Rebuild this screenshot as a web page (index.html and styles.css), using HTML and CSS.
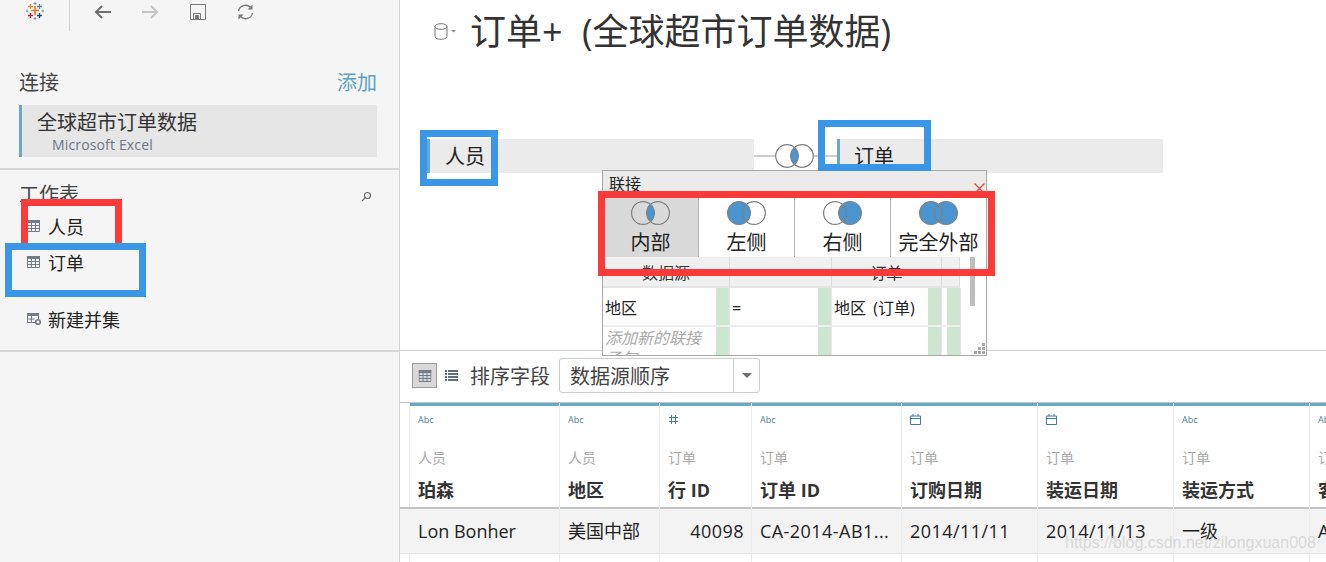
FILE: index.html
```html
<!DOCTYPE html>
<html lang="en">
<head>
    <meta charset="UTF-8">
    <title>订单+ (全球超市订单数据)</title>
    <link rel="stylesheet" href="styles.css">
</head>
<body>
    <div class="page">
        <aside class="sidebar">
            <div class="toolbar">
                <div class="logo-cell">
                    <svg width="18" height="18" viewBox="0 0 18 18" fill="none" stroke-width="1.3">
                        <path d="M9 4v9M5 8.500h8" stroke="#e8762c" stroke-width="1.6"/>
                        <path d="M4.500 2v5M2 4.500h5" stroke="#eb912c"/>
                        <path d="M13.500 2v5M11 4.500h5" stroke="#5b879b"/>
                        <path d="M4.500 11v5M2 13.500h5" stroke="#c72035"/>
                        <path d="M13.500 11v5M11 13.500h5" stroke="#1f447e"/>
                        <path d="M9 0v3M7.500 1.500h3M9 15v3M7.500 16.500h3M1 7.500v3M0 9h2.500M17 7.500v3M15.500 9H18" stroke="#7f96a8" stroke-width="1"/>
                    </svg>
                </div>
                <div class="tools">
                    <svg width="17" height="14" viewBox="0 0 17 14" fill="none" stroke="#6e6e6e" stroke-width="2"><path d="M17 7H2M8 1L2 7l6 6"/></svg>
                    <svg width="17" height="14" viewBox="0 0 17 14" fill="none" stroke="#c4c4c4" stroke-width="2"><path d="M0 7h15M9 1l6 6-6 6"/></svg>
                    <svg width="16" height="16" viewBox="0 0 16 16" fill="none" stroke="#777"><path d="M.5.500h15v15H.5zM3.500 15.500v-6h7v6"/><path d="M5.500 11.500h3v4h-3z" fill="#777"/></svg>
                    <svg width="17" height="16" viewBox="0 0 17 16" fill="none" stroke="#777" stroke-width="1.300"><path d="M1.500 7a7 7 0 0 1 12-3.500M15.500 9a7 7 0 0 1-12 3.500"/><path d="M15.500 .5v5h-5z M1.500 15.500v-5h5z" fill="#777" stroke="none"/></svg>
                </div>
            </div>
            <section class="connections">
                <div class="section-head">
                    <span class="section-title">连接</span>
                    <span class="add-link">添加</span>
                </div>
                <div class="conn-box">
                    <div class="conn-name">全球超市订单数据</div>
                    <div class="conn-type">Microsoft Excel</div>
                </div>
            </section>
            <section class="sheets">
                <div class="section-head sheets-head">
                    <span class="section-title">工作表</span>
                    <svg class="search-icon" width="11" height="11" viewBox="0 0 11 11" fill="none" stroke="#666" stroke-width="1.100"><circle cx="6.500" cy="4.500" r="3"/><path d="M4.300 6.700L1 10"/></svg>
                </div>
                <div class="sheet-item sheet-first">
                    <svg class="sheet-icon" width="13" height="12" viewBox="0 0 13 12"><use href="#table-glyph"/></svg>
                    <span>人员</span>
                </div>
                <div class="sheet-item sheet-second">
                    <svg class="sheet-icon" width="13" height="12" viewBox="0 0 13 12"><use href="#table-glyph"/></svg>
                    <span>订单</span>
                </div>
                <div class="sheet-item sheet-union">
                    <svg class="sheet-icon" width="15" height="14" viewBox="0 0 15 14">
                        <path d="M0 1h12v3H0z" fill="#737b8a"/>
                        <path d="M.5 1.500h11v9H.5zM4.500 4v6.500M.5 7h7" fill="none" stroke="#737b8a"/>
                        <circle cx="11" cy="10" r="2.300" fill="#f5f5f5" stroke="#737b8a" stroke-width="1.600"/>
                    </svg>
                    <span>新建并集</span>
                </div>
            </section>
        </aside>

        <main class="main">
            <div class="canvas">
                <div class="title-row">
                    <svg width="24" height="18" viewBox="0 0 24 18" fill="none" stroke="#777">
                        <ellipse cx="7" cy="3.500" rx="6" ry="2.800"/>
                        <path d="M1 3.500v10c0 1.600 2.700 2.800 6 2.800s6-1.200 6-2.800v-10"/>
                        <path d="M17 7h5l-2.500 2.500z" fill="#888" stroke="none"/>
                    </svg>
                    <h1>订单+ (全球超市订单数据)</h1>
                </div>
                <div class="join-row">
                    <div class="table-pill table-left">人员</div>
                    <div class="join-link">
                        <svg width="83" height="24" viewBox="0 0 83 24" fill="none">
                            <path d="M0 12h22M60 12h23" stroke="#bdbdbd" stroke-width="1.500"/>
                            <path d="M40.500 3.600a11.300 11.300 0 0 1 0 16.800a11.300 11.300 0 0 1 0-16.800z" fill="#4a95d0"/>
                            <circle cx="33" cy="12" r="11.300" stroke="#808080" stroke-width="1.200"/>
                            <circle cx="48" cy="12" r="11.300" stroke="#808080" stroke-width="1.200"/>
                        </svg>
                    </div>
                    <div class="table-pill table-right">订单</div>
                </div>

                <div class="join-popup">
                    <div class="popup-title">
                        <span>联接</span>
                        <svg width="11" height="11" viewBox="0 0 11 11" stroke="#c8553f" stroke-width="1.400"><path d="M.5.500l10 10M10.500.500l-10 10"/></svg>
                    </div>
                    <div class="join-types">
                        <div class="join-type is-active">
                            <svg width="39" height="24" viewBox="0 0 39 24" fill="none"><path d="M19.500 3.600a11.500 11.500 0 0 1 0 16.800a11.500 11.500 0 0 1 0-16.800z" fill="#4a95d0"/><circle cx="12" cy="12" r="11.400" stroke="#808080" stroke-width="1.200"/><circle cx="27" cy="12" r="11.400" stroke="#808080" stroke-width="1.200"/></svg>
                            <span>内部</span>
                        </div>
                        <div class="join-type">
                            <svg width="39" height="24" viewBox="0 0 39 24" fill="none"><circle cx="12" cy="12" r="11.400" fill="#4a95d0"/><circle cx="12" cy="12" r="11.400" stroke="#808080" stroke-width="1.200"/><circle cx="27" cy="12" r="11.400" stroke="#808080" stroke-width="1.200"/></svg>
                            <span>左侧</span>
                        </div>
                        <div class="join-type">
                            <svg width="39" height="24" viewBox="0 0 39 24" fill="none"><circle cx="27" cy="12" r="11.400" fill="#4a95d0"/><circle cx="12" cy="12" r="11.400" stroke="#808080" stroke-width="1.200"/><circle cx="27" cy="12" r="11.400" stroke="#808080" stroke-width="1.200"/></svg>
                            <span>右侧</span>
                        </div>
                        <div class="join-type">
                            <svg width="39" height="24" viewBox="0 0 39 24" fill="none"><circle cx="12" cy="12" r="11.400" fill="#4a95d0"/><circle cx="27" cy="12" r="11.400" fill="#4a95d0"/><circle cx="12" cy="12" r="11.400" stroke="#808080" stroke-width="1.200"/><circle cx="27" cy="12" r="11.400" stroke="#808080" stroke-width="1.200"/></svg>
                            <span>完全外部</span>
                        </div>
                    </div>
                    <div class="clause-grid">
                        <div class="clause-head">数据源</div>
                        <div class="clause-head"></div>
                        <div class="clause-head">订单</div>
                        <div class="clause-head"></div>

                        <div class="clause-cell has-grip">地区</div>
                        <div class="clause-cell has-grip">=</div>
                        <div class="clause-cell has-grip">地区 (订单)</div>
                        <div class="clause-cell has-grip"></div>

                        <div class="clause-cell has-grip clause-add">添加新的联接子句</div>
                        <div class="clause-cell has-grip"></div>
                        <div class="clause-cell has-grip"></div>
                        <div class="clause-cell has-grip"></div>
                    </div>
                    <div class="popup-scroll"></div>
                    <svg class="popup-grip" width="11" height="11" viewBox="0 0 11 11" fill="#a8a8a8"><path d="M8 0h3v3H8zM4 4h3v3H4zM8 4h3v3H8zM0 8h3v3H0zM4 8h3v3H4zM8 8h3v3H8z"/></svg>
                </div>
            </div>

            <div class="sort-bar">
                <div class="view-btn">
                    <svg width="14" height="12" viewBox="0 0 13 12"><use href="#table-glyph"/></svg>
                </div>
                <svg class="list-btn" width="13" height="11" viewBox="0 0 13 11" fill="#646c7c"><path d="M0 0h2v2H0zM3 0h10v2H3zM0 3h2v2H0zM3 3h10v2H3zM0 6h2v2H0zM3 6h10v2H3zM0 9h2v2H0zM3 9h10v2H3z"/></svg>
                <span class="sort-label">排序字段</span>
                <div class="sort-select">
                    <span class="sort-value">数据源顺序</span>
                    <span class="sort-caret"></span>
                </div>
            </div>

            <div class="data-grid">
                <div class="grid-col col-gutter"><div class="col-head"></div><div class="col-cell"></div></div>

                <div class="grid-col col-a">
                    <div class="col-head">
                        <div class="type-icon">Abc</div>
                        <div class="source">人员</div>
                        <div class="field">珀森</div>
                    </div>
                    <div class="col-cell">Lon Bonher</div>
                </div>
                <div class="grid-col col-b">
                    <div class="col-head">
                        <div class="type-icon">Abc</div>
                        <div class="source">人员</div>
                        <div class="field">地区</div>
                    </div>
                    <div class="col-cell">美国中部</div>
                </div>
                <div class="grid-col col-c">
                    <div class="col-head">
                        <div class="type-icon"><svg width="11" height="11" viewBox="0 0 11 11" fill="none" stroke="#3f7f9c"><path d="M3.500 1v9M7.500 1v9M1 3.500h9M1 7.500h9"/></svg></div>
                        <div class="source">订单</div>
                        <div class="field">行 ID</div>
                    </div>
                    <div class="col-cell num wide">40098</div>
                </div>
                <div class="grid-col col-a">
                    <div class="col-head">
                        <div class="type-icon">Abc</div>
                        <div class="source">订单</div>
                        <div class="field">订单 ID</div>
                    </div>
                    <div class="col-cell wide">CA-2014-AB1...</div>
                </div>
                <div class="grid-col col-d">
                    <div class="col-head">
                        <div class="type-icon"><svg width="11" height="11" viewBox="0 0 11 11"><use href="#date-glyph"/></svg></div>
                        <div class="source">订单</div>
                        <div class="field">订购日期</div>
                    </div>
                    <div class="col-cell wide">2014/11/11</div>
                </div>
                <div class="grid-col col-d">
                    <div class="col-head">
                        <div class="type-icon"><svg width="11" height="11" viewBox="0 0 11 11"><use href="#date-glyph"/></svg></div>
                        <div class="source">订单</div>
                        <div class="field">装运日期</div>
                    </div>
                    <div class="col-cell wide">2014/11/13</div>
                </div>
                <div class="grid-col col-d">
                    <div class="col-head">
                        <div class="type-icon">Abc</div>
                        <div class="source">订单</div>
                        <div class="field">装运方式</div>
                    </div>
                    <div class="col-cell">一级</div>
                </div>
                <div class="grid-col col-d">
                    <div class="col-head">
                        <div class="type-icon">Abc</div>
                        <div class="source">订单</div>
                        <div class="field">客户 ID</div>
                    </div>
                    <div class="col-cell">AB-10015</div>
                </div>
            </div>
        </main>

        <!-- annotation boxes drawn over the screenshot -->
        <div class="mark mark-red mark-popup"></div>
        <div class="mark mark-red mark-sheet1"></div>
        <div class="mark mark-blue mark-sheet2"></div>
        <div class="mark mark-blue mark-table1"></div>
        <div class="mark mark-blue mark-table2"></div>
        <div class="watermark">https://blog.csdn.net/zilongxuan008</div>
    </div>

    <svg class="glyphs" width="0" height="0">
        <symbol id="table-glyph" viewBox="0 0 13 12">
            <path d="M0 0h13v3H0z" fill="#737b8a"/>
            <path d="M.5.500h12v11H.5zM.5 5.500h12M.5 8.500h12M4.500 3v8.500M8.500 3v8.500" fill="none" stroke="#737b8a"/>
        </symbol>
        <symbol id="date-glyph" viewBox="0 0 11 11">
            <path d="M.5 2h10v8.500H.5zM.5 4.500h10M3 0v2.500M8 0v2.500" fill="none" stroke="#3f7f9c"/>
        </symbol>
    </svg>
</body>
</html>
```

FILE: styles.css
```css
* {
    box-sizing: border-box;
}
html, body {
    margin: 0;
    height: 100%;
    overflow: hidden;
    background-color: #fff;
}
body {
    font-family: "Open Sans", "Noto Sans CJK SC", sans-serif;
    color: #222;
}
.glyphs {
    position: absolute;
}
.page {
    position: relative;
    display: flex;
    width: 1326px;
    height: 562px;
    overflow: hidden;
}

/* left column */
.sidebar {
    flex: 0 0 400px;
    background-color: #f5f5f5;
    border-right: 1px solid #d4d4d4;
}
.toolbar {
    display: flex;
    height: 31px;
}
.logo-cell {
    width: 70px;
    padding: 2px 0 0 26px;
    border-right: 1px solid #d0d0d0;
}
.tools {
    display: flex;
    align-items: flex-start;
    gap: 31px;
    padding: 4px 0 0 24px;
}
.tools svg:nth-child(-n+2) {
    margin-top: 1px;
}
.connections {
    height: 139px;
    padding: 37px 22px 0 19px;
    border-bottom: 2px solid #d6d6d6;
}
.section-head {
    display: flex;
    justify-content: space-between;
    align-items: center;
    height: 30px;
    font-size: 20px;
    line-height: 30px;
}
.section-title {
    color: #444;
}
.add-link {
    color: #5ba3c4;
}
.conn-box {
    height: 52px;
    margin-top: 7px;
    padding: 4px 0 0 15px;
    background-color: #e6e6e6;
    border-left: 3px solid #6aa8c9;
}
.conn-name {
    font-size: 20px;
    line-height: 27px;
    color: #333;
}
.conn-type {
    padding-left: 15px;
    font-size: 14px;
    line-height: 18px;
    letter-spacing: .15px;
    color: #6c7686;
}
.sheets {
    height: 182px;
    padding: 10px 0 0 19px;
    border-bottom: 2px solid #d6d6d6;
}
.sheets-head {
    padding-right: 27px;
}
.search-icon {
    margin-top: 2px;
}
.sheet-item {
    display: flex;
    align-items: center;
    gap: 8px;
    height: 26px;
    padding-left: 8px;
    font-size: 18px;
    color: #222;
}
.sheet-first {
    margin-top: 3px;
}
.sheet-second {
    margin-top: 10px;
}
.sheet-union {
    margin-top: 31px;
    gap: 6px;
}

/* right column */
.main {
    flex: 1;
    min-width: 0;
}
.canvas {
    position: relative;
    height: 351px;
    border-bottom: 1px solid #d4d4d4;
    padding: 14px 0 0 34px;
}
.title-row {
    display: flex;
    align-items: center;
    gap: 12px;
}
.title-row h1 {
    margin: 0;
    font-size: 36px;
    font-weight: 400;
    line-height: 36px;
    word-spacing: 10px;
    color: #333;
}
.join-row {
    display: flex;
    align-items: center;
    height: 34px;
    margin: 89px 0 0 -14px;
}
.table-pill {
    height: 34px;
    padding-left: 15px;
    font-size: 20px;
    line-height: 36px;
    color: #222;
    background-color: #ebebeb;
    border-left: 3px solid #6aa8c9;
    box-shadow: -7px 0 0 #ebebeb;
}
.table-left {
    width: 327px;
    margin-left: 7px;
}
.table-right {
    width: 326px;
    padding-left: 14px;
    box-shadow: none;
}
.join-link {
    display: flex;
    flex: 0 0 83px;
}
.join-popup {
    position: absolute;
    left: 202px;
    top: 170px;
    width: 385px;
    height: 186px;
    overflow: hidden;
    background-color: #fff;
    border: 1px solid #a8a8a8;
}
.popup-title {
    display: flex;
    justify-content: space-between;
    height: 26px;
    padding: 2px 1px 0 6px;
    font-size: 16px;
    line-height: 22px;
    background-color: #ebebeb;
}
.popup-title svg {
    margin-top: 10px;
}
.join-types {
    display: grid;
    grid-template-columns: 96px 96px 96px 95px;
    height: 60px;
    background-color: #fff;
}
.join-type {
    display: flex;
    flex-direction: column;
    align-items: center;
    padding-top: 4px;
    font-size: 20px;
    line-height: 30px;
    color: #222;
    border-right: 1px solid #b5b5b5;
}
.join-type:last-child {
    border-right: none;
}
.join-type span {
    margin-top: 3px;
    white-space: nowrap;
}
.is-active {
    background-color: #d9d9d9;
}
.clause-grid {
    display: grid;
    grid-template-columns: 127px 102px 110px 18px;
    grid-template-rows: 31px 39px 39px;
    width: 357px;
    font-size: 16px;
}
.clause-head {
    line-height: 32px;
    text-align: center;
    color: #333;
    background-color: #f0f0f0;
    border-right: 1px solid #ddd;
    border-bottom: 2px solid #e6e6e6;
}
.clause-cell {
    padding: 8px 16px 0 2px;
    line-height: 24px;
    word-spacing: 3px;
    overflow: hidden;
    border-right: 1px solid #e6e6e6;
    border-bottom: 2px solid #eee;
}
.has-grip {
    background: linear-gradient(#cde6cf, #cde6cf) no-repeat right 0 top 0 / 13px 100%;
}
.clause-add {
    padding-top: 1px;
    line-height: 20px;
    font-style: italic;
    color: #aaa;
}
.popup-scroll {
    position: absolute;
    left: 367px;
    top: 86px;
    width: 5px;
    height: 49px;
    background-color: #bdbdbd;
}
.popup-grip {
    position: absolute;
    right: 1px;
    bottom: 1px;
}
.sort-bar {
    display: flex;
    align-items: center;
    height: 51px;
    padding: 0 0 2px 12px;
}
.view-btn {
    display: flex;
    align-items: center;
    justify-content: center;
    width: 25px;
    height: 25px;
    background-color: #d9d9d9;
    border: 1px solid #9a9a9a;
}
.list-btn {
    margin-left: 8px;
}
.sort-label {
    margin-left: 12px;
    font-size: 20px;
    color: #444;
}
.sort-select {
    display: flex;
    justify-content: space-between;
    align-items: center;
    width: 201px;
    height: 35px;
    margin-left: 9px;
    padding-left: 10px;
    background-color: #fff;
    border: 1px solid #ccc;
    border-radius: 3px;
}
.sort-value {
    font-size: 20px;
    color: #444;
}
.sort-caret {
    position: relative;
    width: 26px;
    height: 100%;
    border-left: 1px solid #ccc;
}
.sort-caret::after {
    content: "";
    position: absolute;
    left: 8px;
    top: 14px;
    border-style: solid;
    border-width: 5px 5px 0;
    border-color: #6e6e6e transparent transparent;
}
.data-grid {
    display: flex;
    height: 160px;
    border-top: 1px solid #c4c4c4;
}
.grid-col {
    flex: none;
    border-right: 1px solid #ececec;
}
.col-gutter {
    width: 10px;
}
.col-a {
    width: 150px;
}
.col-b {
    width: 100px;
}
.col-c {
    width: 92px;
}
.col-d {
    width: 136px;
}
.grid-col:not(.col-gutter) .col-head {
    border-top: 3px solid #64a8cc;
}
.col-head {
    height: 106px;
    padding: 6px 8px 0;
    border-bottom: 2px solid #c4c4c4;
}
.type-icon {
    display: flex;
    align-items: center;
    height: 14px;
    font-size: 9px;
    color: #3f7f9c;
}
.source {
    margin-top: 22px;
    font-size: 14px;
    line-height: 20px;
    color: #aaa;
}
.field {
    margin-top: 10px;
    font-size: 18px;
    font-weight: 700;
    line-height: 24px;
    color: #333;
}
.col-cell {
    height: 45px;
    padding: 0 7px 0 8px;
    font-size: 18px;
    line-height: 44px;
    white-space: nowrap;
    overflow: hidden;
    color: #222;
    background-color: #f3f3f3;
    border-bottom: 1px solid #e6e6e6;
}
.col-gutter .col-head {
    border-top: none;
}
.num {
    text-align: right;
}
.wide {
    letter-spacing: .45px;
}

/* annotations */
.mark {
    position: absolute;
    border: 7px solid;
}
.mark-red {
    border-color: #fc3a3a;
}
.mark-blue {
    border-color: #3a96e6;
}
.mark-popup {
    left: 598px;
    top: 191px;
    width: 397px;
    height: 85px;
}
.mark-sheet1 {
    left: 21px;
    top: 199px;
    width: 101px;
    height: 51px;
}
.mark-sheet2 {
    left: 5px;
    top: 243px;
    width: 141px;
    height: 54px;
}
.mark-table1 {
    left: 420px;
    top: 130px;
    width: 78px;
    height: 56px;
}
.mark-table2 {
    left: 818px;
    top: 120px;
    width: 113px;
    height: 51px;
}
.watermark {
    position: absolute;
    left: 1065px;
    top: 532px;
    font-family: "Liberation Sans", sans-serif;
    font-size: 16px;
    line-height: 22px;
    color: rgba(205, 205, 205, 0.7);
    white-space: nowrap;
}
```
